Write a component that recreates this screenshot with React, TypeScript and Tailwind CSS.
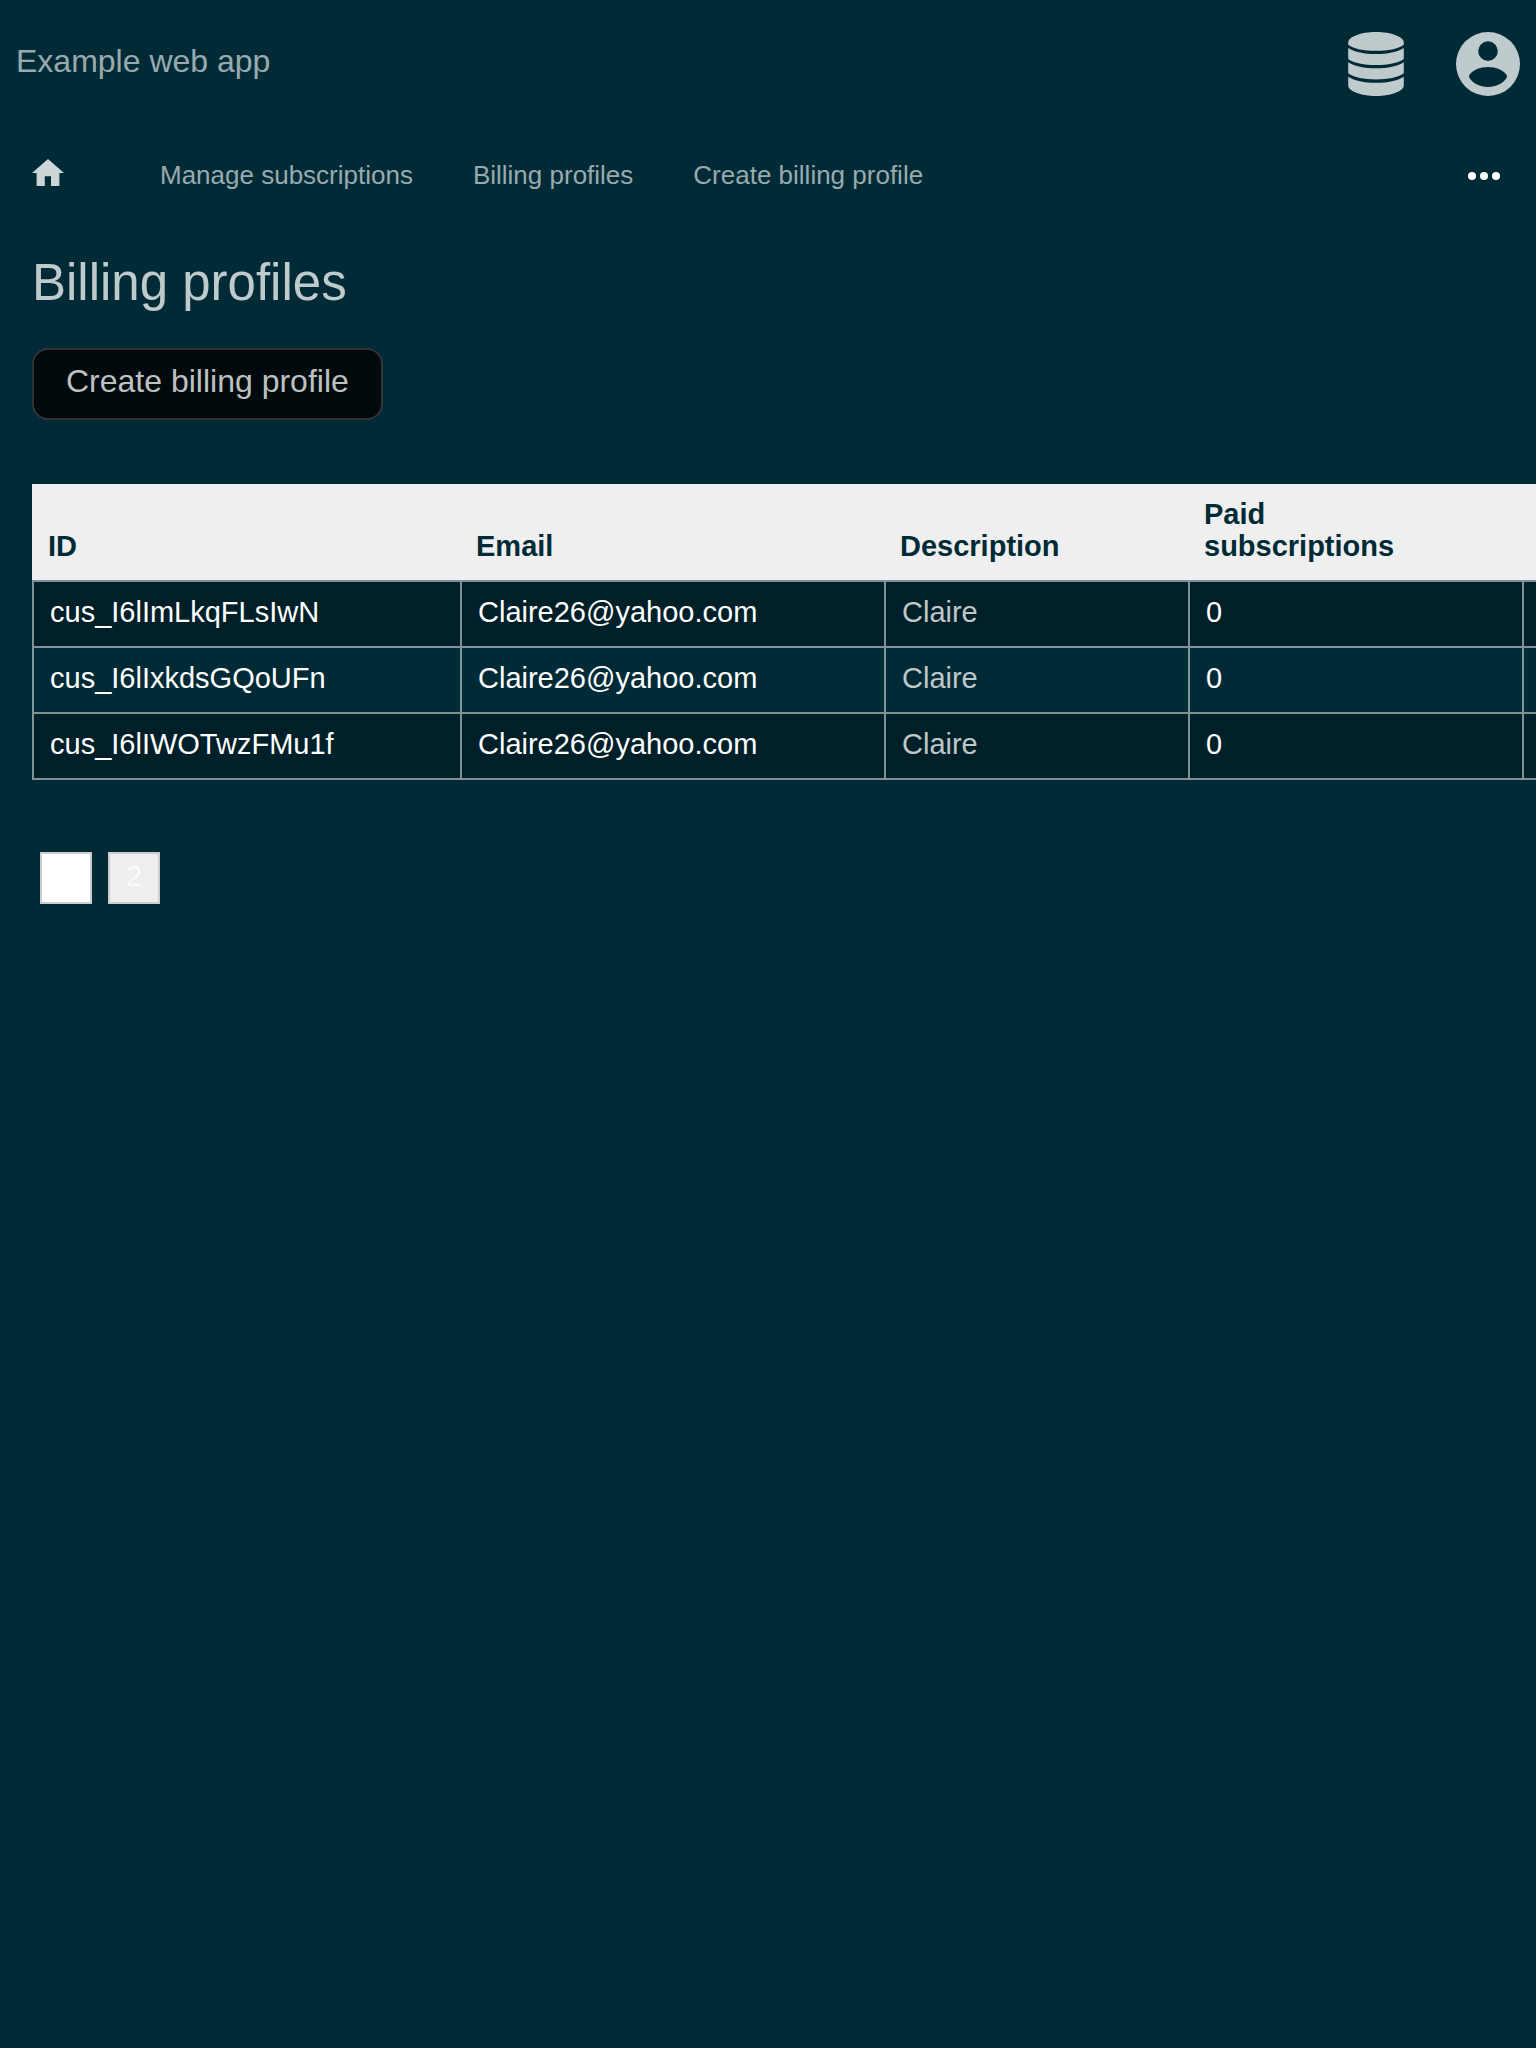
const columns = [["ID"], ["Email"], ["Description"], ["Paid", "subscriptions"]];

const profiles = [
  { id: "cus_I6lImLkqFLsIwN", email: "Claire26@yahoo.com", description: "Claire", paid: 0 },
  { id: "cus_I6lIxkdsGQoUFn", email: "Claire26@yahoo.com", description: "Claire", paid: 0 },
  { id: "cus_I6lIWOTwzFMu1f", email: "Claire26@yahoo.com", description: "Claire", paid: 0 },
];

const links = ["Manage subscriptions", "Billing profiles", "Create billing profile"];

function DatabaseIcon() {
  return (
    <svg viewBox="0 0 56 64" className="h-16 w-14" fill="currentColor" aria-hidden="true">
      <path d="M28 0C43.5 0 55.800 4.800 55.800 10.700V12.700C50 17 40 18.800 28 18.800S6 17 0.200 12.700V10.700C0.200 4.800 12.500 0 28 0Z" />
      <path d="M0.200 15.900C7 20 16 22 28 22S49 20 55.800 15.900V27C50 31.300 40 33 28 33S6 31.300 0.200 27Z" />
      <path d="M0.200 30.300C7 34.300 16 36.300 28 36.300S49 34.300 55.800 30.300V41.300C50 45.600 40 47.400 28 47.400S6 45.600 0.200 41.300Z" />
      <path d="M0.200 44.700C7 48.700 16 50.700 28 50.700S49 48.700 55.800 44.700V53.300C55.800 59.200 43.500 64 28 64S0.200 59.200 0.200 53.300Z" />
    </svg>
  );
}

function AccountIcon() {
  return (
    <svg viewBox="0 0 64 64" className="size-16" fill="currentColor" aria-hidden="true">
      <path
        fillRule="evenodd"
        d="M32 0a32 32 0 1 0 0 64a32 32 0 1 0 0-64ZM32 9.300a9.800 9.800 0 1 1 0 19.600a9.800 9.800 0 1 1 0-19.600ZM32 35C40 35 47 38 50.500 42.800Q51.600 44.400 50.500 46C47 51.500 40 55 32 55S17 51.500 13.500 46Q12.400 44.400 13.500 42.800C17 38 24 35 32 35Z"
      />
    </svg>
  );
}

function HomeIcon() {
  return (
    <svg viewBox="0 0 32 27" className="h-[27px] w-8" fill="currentColor" aria-hidden="true">
      <path d="M16 0L32 14H27.400V27H19V17.300H12.800V27H4.600V14H0Z" />
    </svg>
  );
}

function DotsIcon() {
  return (
    <svg viewBox="0 0 32 8" className="h-2 w-8" fill="currentColor" aria-hidden="true">
      <circle cx="4" cy="4" r="4" />
      <circle cx="16" cy="4" r="4" />
      <circle cx="28" cy="4" r="4" />
    </svg>
  );
}

export default function App() {
  return (
    <div className="min-h-screen overflow-hidden bg-[#002b36] font-['Liberation_Sans',Arial,sans-serif] text-white">
      <header className="flex h-32 items-center justify-between px-4">
        <a href="#" className="pb-1.5 text-[32px] leading-9 text-[#99aaaf]">Example web app</a>
        <div className="flex items-center gap-13 text-[#bfcacd]">
          <button type="button" aria-label="Administration"><DatabaseIcon /></button>
          <button type="button" aria-label="Account"><AccountIcon /></button>
        </div>
      </header>

      <nav className="flex h-24 items-center justify-between px-8" aria-label="Main">
        <div className="flex items-center">
          <a href="#" aria-label="Home" className="mr-24 pb-2 text-[#ccd5d7]"><HomeIcon /></a>
          <div className="flex gap-15 pb-0.5 text-[26px] leading-8 text-[#99aaaf]">
            {links.map((label) => (
              <a key={label} href="#">{label}</a>
            ))}
          </div>
        </div>
        <button type="button" aria-label="More" className="mr-1"><DotsIcon /></button>
      </nav>

      <main className="pl-8 pt-7">
        <h1 className="text-[51px] leading-[62px] text-[#bfcacd]">Billing profiles</h1>
        <button
          type="button"
          className="mt-[34px] h-[72px] rounded-2xl border-2 border-[#333] bg-[#000a0c] px-8 pb-1.5 text-[32px] leading-9 text-[#bfc0c1]"
        >
          Create billing profile
        </button>

        <div className="mt-16 -mr-8">
          <table className="w-full table-fixed border-separate border-spacing-0 text-left text-[29px] leading-8">
            <colgroup>
              <col className="w-[428px]" />
              <col className="w-[424px]" />
              <col className="w-[304px]" />
              <col className="w-[334px]" />
              <col />
            </colgroup>
            <thead className="bg-[#efefef] align-bottom text-[#002b36]">
              <tr>
                {columns.map((lines) => (
                  <th key={lines[0]} scope="col" className="px-4 pt-3.5 pb-4.5 font-bold">
                    {lines.map((line) => (
                      <span key={line} className="block">{line}</span>
                    ))}
                  </th>
                ))}
                <td />
              </tr>
            </thead>
            <tbody className="[&>tr:last-child>td]:border-b-2">
              {profiles.map((p) => (
                <tr key={p.id} className="odd:bg-[#002029]">
                  <td className="border-l-2 border-t-2 border-white/50 px-4 pt-3.5 pb-4.5"><a href="#">{p.id}</a></td>
                  <td className="border-l-2 border-t-2 border-white/50 px-4 pt-3.5 pb-4.5">{p.email}</td>
                  <td className="border-l-2 border-t-2 border-white/50 px-4 pt-3.5 pb-4.5 text-[#bfc7c9]">{p.description}</td>
                  <td className="border-l-2 border-t-2 border-white/50 px-4 pt-3.5 pb-4.5">{p.paid}</td>
                  <td className="border-l-2 border-t-2 border-white/50" />
                </tr>
              ))}
            </tbody>
          </table>
        </div>

        <div className="ml-2 mt-18 flex gap-4 text-[29px] leading-8">
          <button type="button" aria-label="Page 1" aria-current="page" className="size-13 border-2 border-[#ccc] bg-white" />
          <button type="button" className="size-13 border-2 border-[#ccc] bg-[#eee] pb-1 text-[#fafafa]">2</button>
        </div>
      </main>
    </div>
  );
}
